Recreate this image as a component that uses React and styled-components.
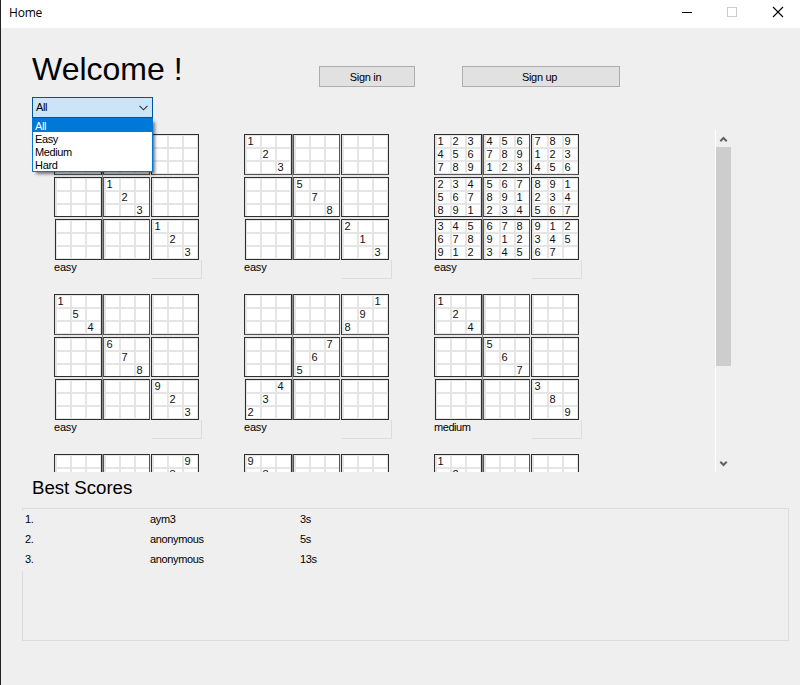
import React from "react";
import styled, { createGlobalStyle, css } from "styled-components";

const Global = createGlobalStyle`
  *{box-sizing:border-box}
  html,body{margin:0;padding:0;background:#efefef;overflow:hidden}
`;

const Window = styled.div`
  width:800px;height:685px;background:#efefef;border-left:1px solid #222226;
  font-family:"Liberation Sans",Arial,sans-serif;font-size:11px;color:#000;
  display:flex;flex-direction:column;overflow:hidden;
`;
const TitleBar = styled.header`
  height:28px;flex:none;background:#fff;display:flex;align-items:flex-start;justify-content:space-between;
  padding-left:8px;
`;
const Title = styled.h1`
  margin:5px 0 0;font:400 12px/16px "Open Sans","Noto Sans",sans-serif;letter-spacing:-0.2px;
`;
const Controls = styled.div`display:flex;padding:6px 16px 0 0;svg{display:block;margin-left:33px}svg:last-child{margin-left:34px}`;

const Head = styled.section`
  display:flex;height:69px;flex:none;padding-left:31px;
`;
const Welcome = styled.h2`
  margin:22px 0 0;width:287px;font-weight:400;font-size:32px;line-height:39px;letter-spacing:0;
`;
const Button = styled.button`
  margin:38px ${p => p.$gap || 0}px 0 0;width:${p => p.$w}px;height:21px;padding:1px 3px 0 0;
  border:1px solid #adadad;background:#e1e1e1;font:inherit;font-size:11px;line-height:18px;color:#000;
  letter-spacing:-0.3px;
`;

const ComboWrap = styled.div`position:relative;z-index:2;width:121px;height:21px;margin-left:31px;flex:none;`;
const Combo = styled.div`
  height:21px;border:1px solid #005499;background:#cce4f7;display:flex;align-items:center;
  justify-content:space-between;padding:0 4px 0 3px;line-height:19px;letter-spacing:-0.4px;
`;
const Menu = styled.ul`
  position:absolute;top:21px;left:0;width:121px;height:54px;margin:0;padding:0;list-style:none;
  background:#fff;border:1px solid #0078d7;border-top:0;box-shadow:3px 3px 3px -1px rgba(0,0,0,.5);
`;
const Item = styled.li`
  height:${p => (p.$on ? 14 : 13)}px;line-height:${p => (p.$on ? 16 : 15)}px;padding-left:2px;letter-spacing:${p => p.$ls}px;
  ${p => p.$on && css`background:#0078d7;color:#fff;`}
`;

const Viewport = styled.section`
  display:flex;height:342px;flex:none;margin:12px 0 0 31px;width:699px;overflow:hidden;
`;
const Cards = styled.div`
  width:683px;padding:4px 0 0 22px;display:grid;grid-template-columns:repeat(3,190px);
  grid-auto-rows:160px;
`;
const Board = styled.div`
  width:145px;height:126px;display:grid;grid-template-columns:48px 47px 48px;
  grid-template-rows:41px 40px 41px;column-gap:1px;row-gap:2px;
  background:linear-gradient(90deg,#e6e6e6 48px,#8a8a8a 48px,#8a8a8a 49px,#e6e6e6 49px);
`;
const Box = styled.div`
  border:1px solid #2e2e2e;background:#e5e5e5;
  display:grid;grid-template-columns:repeat(3,13px);grid-template-rows:repeat(3,11px);
  gap:2px;padding:1px 0 0 1.5px;overflow:hidden;
  &:nth-child(-n+3){border-bottom-color:#555}
  &:nth-child(3n+2){border-left-color:#555;border-right-color:#555}
  &:nth-child(7){margin-left:1px;padding-left:.5px}
`;
const Cell = styled.div`
  background:#fff;font-size:10px;line-height:11px;color:#111;
  span{display:block;width:7px;text-align:center;transform:scaleX(1.1);}
`;
const CardFoot = styled.div`display:flex;justify-content:space-between;width:148px;height:19px;`;
const Level = styled.span`line-height:14px;letter-spacing:${p => p.$ls}px;`;
const Slot = styled.span`width:50px;border:solid #dcdcdc;border-width:0 1px 1px 0;`;

const Scrollbar = styled.div`
  width:16px;border-left:1px solid #fff;display:flex;flex-direction:column;align-items:center;
  svg{display:block;flex:none}
`;
const Thumb = styled.div`width:15px;height:219px;background:#cdcdcd;margin-bottom:89px;`;

const ScoresTitle = styled.h3`
  margin:4px 0 0 31px;height:32px;line-height:23px;font-weight:400;font-size:18.7px;letter-spacing:-0.05px;flex:none;
`;
const Group = styled.section`
  margin-left:21px;width:767px;height:133px;border:1px solid #dcdcdc;padding-top:2px;flex:none;
`;
const Score = styled.div`
  display:grid;grid-template-columns:125px 150px 1fr;height:20px;line-height:16px;
  margin-left:-1px;padding-left:3px;background:#efefef;letter-spacing:-0.35px;
`;

const DIAG = [0, 4, 8];
const ANTI = [2, 4, 6];
const place = (...groups) => {
  const boxes = Array.from({ length: 9 }, () => Array(9).fill(""));
  groups.forEach(([box, slots, digits]) =>
    digits.split("").forEach((d, i) => { boxes[box][slots[i]] = d; }));
  return boxes;
};
const full = ["123456789", "456789123", "789123456", "234567891", "567891234", "891234567", "345678912", "678912345", "91234567"]
  .map(s => Array.from({ length: 9 }, (_, i) => s[i] || ""));

const puzzles = [
  { level: "easy", boxes: place([0, DIAG, "123"], [4, DIAG, "123"], [8, DIAG, "123"]) },
  { level: "easy", boxes: place([0, DIAG, "123"], [4, DIAG, "578"], [8, DIAG, "213"]) },
  { level: "easy", boxes: full },
  { level: "easy", boxes: place([0, DIAG, "154"], [4, DIAG, "678"], [8, DIAG, "923"]) },
  { level: "easy", boxes: place([2, ANTI, "198"], [4, ANTI, "765"], [6, ANTI, "432"]) },
  { level: "medium", boxes: place([0, DIAG, "124"], [4, DIAG, "567"], [8, DIAG, "389"]) },
  { boxes: place([2, ANTI, "98"]) },
  { boxes: place([0, DIAG, "98"]) },
  { boxes: place([0, DIAG, "12"]) },
];
const scores = [["1.", "aym3", "3s"], ["2.", "anonymous", "5s"], ["3.", "anonymous", "13s"]];

function Puzzle({ level, boxes }) {
  return (
    <div>
      <Board>
        {boxes.map((b, i) => (
          <Box key={i}>{b.map((d, j) => <Cell key={j}>{d && <span>{d}</span>}</Cell>)}</Box>
        ))}
      </Board>
      {level && <CardFoot><Level $ls={level === "easy" ? -0.2 : -0.45}>{level}</Level><Slot /></CardFoot>}
    </div>
  );
}

export default function App() {
  return (
    <>
      <Global />
      <Window>
        <TitleBar>
          <Title>Home</Title>
          <Controls>
            <svg width="12" height="12" shapeRendering="crispEdges"><path d="M1 6.5h10" stroke="#000" /></svg>
            <svg width="12" height="12" shapeRendering="crispEdges"><path d="M1.5 1.5h9v9h-9z" fill="none" stroke="#ccc" /></svg>
            <svg width="12" height="12"><path d="M1 1l10 10M11 1L1 11" stroke="#000" strokeWidth="1.1" /></svg>
          </Controls>
        </TitleBar>
        <Head>
          <Welcome>Welcome !</Welcome>
          <Button $w={96} $gap={47}>Sign in</Button>
          <Button $w={158}>Sign up</Button>
        </Head>
        <ComboWrap>
          <Combo>
            All
            <svg width="9" height="6"><path d="M.5.8l4 4 4-4" fill="none" stroke="#333" strokeWidth="1.1" /></svg>
          </Combo>
          <Menu>
            <Item $on $ls={-0.4}>All</Item>
            <Item $ls={-0.4}>Easy</Item>
            <Item $ls={-0.4}>Medium</Item>
            <Item $ls={-0.3}>Hard</Item>
          </Menu>
        </ComboWrap>
        <Viewport>
          <Cards>{puzzles.map((p, i) => <Puzzle key={i} {...p} />)}</Cards>
          <Scrollbar>
            <svg width="15" height="17"><path d="M4.3 11.2L7.5 8l3.2 3.2" fill="none" stroke="#606060" strokeWidth="2" /></svg>
            <Thumb />
            <svg width="15" height="17"><path d="M4.3 6.8L7.5 10l3.2-3.2" fill="none" stroke="#606060" strokeWidth="2" /></svg>
          </Scrollbar>
        </Viewport>
        <ScoresTitle>Best Scores</ScoresTitle>
        <Group>
          {scores.map(([n, who, time]) => (
            <Score key={n}><span>{n}</span><span>{who}</span><span>{time}</span></Score>
          ))}
        </Group>
      </Window>
    </>
  );
}
